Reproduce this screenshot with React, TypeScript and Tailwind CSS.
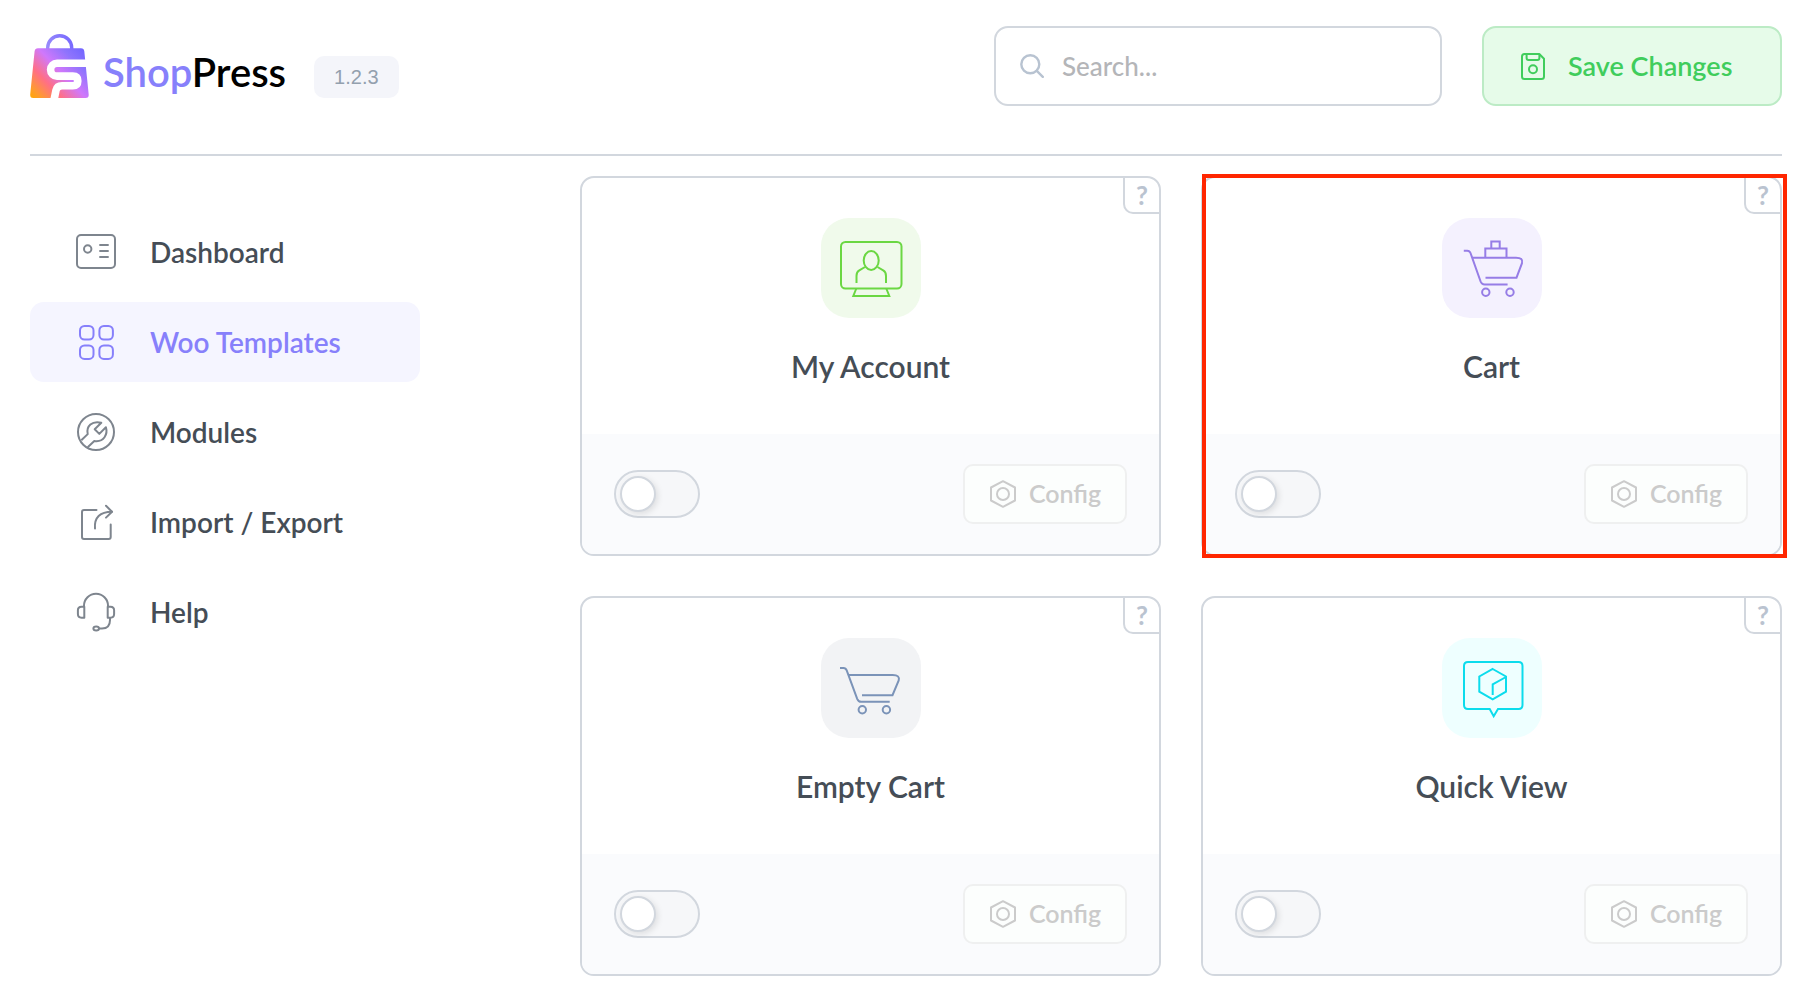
import React, { useState } from 'react';

type IconProps = { className?: string };

const Logo: React.FC<IconProps> = ({ className }) => (
  <svg viewBox="0 0 59 64" fill="none" className={className} aria-hidden="true">
    <defs>
      <linearGradient id="bag" x1="0" y1="64" x2="52" y2="14" gradientUnits="userSpaceOnUse">
        <stop offset="0" stopColor="#ffa800" />
        <stop offset="0.12" stopColor="#ff9a30" />
        <stop offset="0.32" stopColor="#ff6f86" />
        <stop offset="0.56" stopColor="#d078fb" />
        <stop offset="0.8" stopColor="#8f74fd" />
        <stop offset="1" stopColor="#7366ff" />
      </linearGradient>
      <linearGradient id="handle" x1="16" y1="14" x2="43" y2="6" gradientUnits="userSpaceOnUse">
        <stop offset="0" stopColor="#9a8dfb" />
        <stop offset="1" stopColor="#7668ff" />
      </linearGradient>
    </defs>
    <path d="M17.7 16v-2.2a12 12 0 0 1 24 0V16" stroke="url(#handle)" strokeWidth="3.4" />
    <path
      d="M8 14.3h43q3 0 3.3 3l4.4 43.2q.3 3.5-3.2 3.5H3.2Q0 64 .2 60.5l4.4-43.2q.4-3 3.4-3z"
      fill="url(#bag)"
    />
    <path
      d="M59 29.3H27a6.4 6.4 0 0 0 0 12.8h15.8q5 0 5 4.8t-5 4.8H32q-5 0-6 4.5L24 66"
      stroke="#fff"
      strokeWidth="7.6"
    />
  </svg>
);

const DashboardIcon: React.FC<IconProps> = ({ className }) => (
  <svg viewBox="0 0 40 40" fill="none" stroke="currentColor" strokeWidth="2" className={className} aria-hidden="true">
    <rect x="1" y="3" width="38" height="33" rx="4" />
    <circle cx="11.7" cy="17" r="3.7" />
    <path d="M23.3 13h9.4M23.3 19h9.4M23.3 25h9.4" />
  </svg>
);

const TemplatesIcon: React.FC<IconProps> = ({ className }) => (
  <svg viewBox="0 0 40 40" fill="none" stroke="currentColor" strokeWidth="2" className={className} aria-hidden="true">
    <rect x="4" y="4" width="13.5" height="13.5" rx="4.5" />
    <rect x="23.4" y="4" width="13.5" height="13.5" rx="4.5" />
    <rect x="4" y="23.4" width="13.5" height="13.5" rx="4.5" />
    <rect x="23.4" y="23.4" width="13.5" height="13.5" rx="4.5" />
  </svg>
);

const ModulesIcon: React.FC<IconProps> = ({ className }) => (
  <svg viewBox="0 0 40 40" fill="none" stroke="currentColor" strokeWidth="2" strokeLinejoin="round" className={className} aria-hidden="true">
    <circle cx="20" cy="20" r="18" />
    <path d="m5.3 28.3 6.4-6.2C10 14 16 8.5 25.3 10.7l-6.6 6.6 4.6 4.6 6.6-6.6C32 22 28 30.500 18.3 29l-6.6 6.2" />
  </svg>
);

const TransferIcon: React.FC<IconProps> = ({ className }) => (
  <svg viewBox="0 0 40 40" fill="none" stroke="currentColor" strokeWidth="2" strokeLinecap="round" strokeLinejoin="round" className={className} aria-hidden="true">
    <path d="M20.5 8H8q-2 0-2 2v25q0 2 2 2h24.7q2 0 2-2V22.5" />
    <path d="M19 26.5C18 15.5 24 9.7 36 9.7" />
    <path d="m30 3.8 6 5.9-6 5.9" />
  </svg>
);

const HelpIcon: React.FC<IconProps> = ({ className }) => (
  <svg viewBox="0 0 40 40" fill="none" stroke="currentColor" strokeWidth="2" strokeLinejoin="round" className={className} aria-hidden="true">
    <path d="M8 15v-1.3a12 12 0 0 1 24 0V15" />
    <path d="M8.3 14.7H5.5Q1.9 14.7 1.9 18.3v3.8q0 3.6 3.6 3.6h2.8z" />
    <path d="M31.7 14.7h2.8q3.6 0 3.6 3.6v3.8q0 3.6-3.6 3.6h-2.8z" />
    <path d="M34 26v2q0 8.5-8 8.5h-3" />
    <ellipse cx="20.2" cy="36.5" rx="2.8" ry="1.9" />
  </svg>
);

const SearchIcon: React.FC<IconProps> = ({ className }) => (
  <svg viewBox="0 0 24 24" fill="none" stroke="currentColor" strokeWidth="2.4" strokeLinecap="round" className={className} aria-hidden="true">
    <circle cx="10.3" cy="10.3" r="9" />
    <path d="m16.8 16.8 6 6" />
  </svg>
);

const SaveIcon: React.FC<IconProps> = ({ className }) => (
  <svg viewBox="0 0 24 27" fill="none" stroke="currentColor" strokeWidth="2" strokeLinejoin="round" className={className} aria-hidden="true">
    <path d="M3.5 1h14.8L23 5.8v17.7q0 2.5-2.5 2.5h-17Q1 26 1 23.5v-20Q1 1 3.5 1z" />
    <path d="M5.6 1v4q0 2 2 2h8.800q2 0 2-2V1" />
    <circle cx="12" cy="16.3" r="4" />
  </svg>
);

const ConfigIcon: React.FC<IconProps> = ({ className }) => (
  <svg viewBox="0 0 28 28" fill="none" stroke="currentColor" strokeWidth="2" strokeLinejoin="round" className={className} aria-hidden="true">
    <path d="M14 1.2 26 7.5v13l-12 6.3-12-6.3v-13z" />
    <circle cx="14" cy="14" r="6" />
  </svg>
);

const AccountArt: React.FC<IconProps> = ({ className }) => (
  <svg viewBox="0 0 100 100" fill="none" stroke="currentColor" strokeWidth="2" className={className} aria-hidden="true">
    <rect x="20" y="24" width="60.5" height="46.5" rx="4.5" />
    <path d="m35.3 70.5-3 7.5h36l-3-7.5" />
    <ellipse cx="50.2" cy="42.5" rx="7.5" ry="9.5" />
    <path d="M35.5 65v-7q0-4 2.8-5.600L44 49M65 65v-7q0-4-2.8-5.600L56.5 49" />
  </svg>
);

const FullCartArt: React.FC<IconProps> = ({ className }) => (
  <svg viewBox="0 0 100 100" fill="none" stroke="currentColor" strokeWidth="2" className={className} aria-hidden="true">
    <path d="M21.8 32.7h3.5q2.3 0 3.2 2.3L38.6 63.5q1.2 3 4 3h23" />
    <path d="M30.3 39.7H74q7.500 0 6 5.5l-5.5 14.5H43.5" />
    <path d="M43.3 39.7v-9.2h21.2v9.2M49.3 30.5v-7h8.4v7" />
    <circle cx="43.8" cy="74.3" r="3.7" />
    <circle cx="68" cy="74.3" r="3.7" />
  </svg>
);

const EmptyCartArt: React.FC<IconProps> = ({ className }) => (
  <svg viewBox="0 0 100 100" fill="none" stroke="currentColor" strokeWidth="2" className={className} aria-hidden="true">
    <path d="M19 30h3.5q2.3 0 3.2 2.3L36.2 60.8q1.2 3 4 3h28.5" />
    <path d="M27.7 37h44q7.500 0 6 5.5L71.5 57.2H41" />
    <circle cx="41.3" cy="71.7" r="3.7" />
    <circle cx="65.4" cy="71.7" r="3.7" />
  </svg>
);

const QuickViewArt: React.FC<IconProps> = ({ className }) => (
  <svg viewBox="0 0 100 100" fill="none" stroke="currentColor" strokeWidth="2" className={className} aria-hidden="true">
    <path d="M26 24h50.500q4 0 4 4v39q0 4-4 4H56l-4.3 7.3L47.7 71H26q-4 0-4-4V28q0-4 4-4z" />
    <path d="m50.700 31 13.300 7.500v15.200l-13.300 7.600-13.400-7.600V38.500z" />
    <path d="m64 39-13.300 7.400V57" />
  </svg>
);

const navItems = [
  { label: 'Dashboard', Icon: DashboardIcon },
  { label: 'Woo Templates', Icon: TemplatesIcon },
  { label: 'Modules', Icon: ModulesIcon },
  { label: 'Import / Export', Icon: TransferIcon },
  { label: 'Help', Icon: HelpIcon },
];

const templates = [
  { title: 'My Account', Art: AccountArt, tile: 'bg-[#f0faeb] text-[#6bd743]', highlighted: false },
  { title: 'Cart', Art: FullCartArt, tile: 'bg-[#f4f1fe] text-[#967de6]', highlighted: true },
  { title: 'Empty Cart', Art: EmptyCartArt, tile: 'bg-[#f2f3f5] text-[#7b93b8]', highlighted: false },
  { title: 'Quick View', Art: QuickViewArt, tile: 'bg-[#eeffff] text-[#0cdcec]', highlighted: false },
];

interface TemplateCardProps {
  title: string;
  Art: React.FC<IconProps>;
  tile: string;
  highlighted: boolean;
}

const TemplateCard: React.FC<TemplateCardProps> = ({ title, Art, tile, highlighted }) => {
  const [enabled, setEnabled] = useState(false);

  return (
    <article className="relative flex flex-col rounded-[14px] border-2 border-[#d2d7de]">
      <button
        type="button"
        aria-label={`About ${title}`}
        className="absolute top-0 right-0 flex size-9 items-center justify-center rounded-bl-[10px] border-b-2 border-l-2 border-[#d2d7de] text-[26px] leading-none font-bold text-[#bac3d0]"
      >
        ?
      </button>

      <div className="flex flex-col items-center pt-10 pb-12">
        <div className={`size-[100px] rounded-[28px] ${tile}`}>
          <Art className="size-full" />
        </div>
        <h2 className="mt-7 text-[30px] leading-10 font-semibold">{title}</h2>
      </div>

      <div className="flex items-center justify-between rounded-b-xl bg-[#fafbfd] px-8 py-[30px]">
        <input
          type="checkbox"
          role="switch"
          aria-label={`Enable ${title}`}
          checked={enabled}
          onChange={(e) => setEnabled(e.target.checked)}
          className="flex h-12 w-[86px] appearance-none items-center rounded-full border-2 border-[#d2d7de] bg-[#f6f7f9] px-1 before:size-9 before:rounded-full before:border-2 before:border-[#d2d7de] before:bg-white before:shadow-[2px_2px_6px_rgba(0,0,0,0.1)] before:content-[''] checked:justify-end checked:bg-[#8780fb]"
        />
        <button
          type="button"
          disabled={!enabled}
          className="flex h-[60px] w-[164px] items-center justify-center gap-3 rounded-[10px] border-2 border-[#eff0f0] bg-[#fcfefd] text-[25px] font-semibold text-[#cbcbcb]"
        >
          <ConfigIcon className="size-7" />
          Config
        </button>
      </div>

      {/* Callout frame drawn over the card's edge */}
      {highlighted && (
        <div className="pointer-events-none absolute -top-1 -right-[7px] -bottom-1 -left-px border-4 border-[#ff2600]" />
      )}
    </article>
  );
};

export default function App() {
  const [query, setQuery] = useState('');
  const [active, setActive] = useState('Woo Templates');

  return (
    <div className="bg-white pr-8 pb-[26px] pl-[30px] font-['Lato','Liberation_Sans',sans-serif] text-[#454d56]">
      <header className="flex items-center justify-between border-b-2 border-[#d2d7de] pt-[26px] pb-12">
        <div className="flex items-end">
          <Logo className="h-16 w-[59px]" />
          <div className="ml-3.5 text-[40px] leading-[52px] font-semibold text-black">
            <span className="text-[#8780fb]">Shop</span>Press
          </div>
          <span className="ml-7 rounded-[10px] bg-[#f4f5fa] px-5 font-['Liberation_Sans',sans-serif] text-xl leading-[42px] text-[#93a0ae]">
            1.2.3
          </span>
        </div>

        <div className="flex gap-10">
          <label className="flex h-20 w-[448px] items-center gap-[18px] rounded-[14px] border-2 border-[#d2d7de] px-6">
            <SearchIcon className="size-6 shrink-0 text-[#b8c3d1]" />
            <input
              type="text"
              aria-label="Search"
              placeholder="Search..."
              value={query}
              onChange={(e) => setQuery(e.target.value)}
              className="min-w-0 flex-1 text-[26px] font-medium outline-none placeholder:text-[#b4b5b8]"
            />
          </label>
          <button
            type="button"
            className="flex h-20 w-[300px] items-center gap-[23px] rounded-[14px] border-2 border-[#bcebc5] bg-[#e6fbe9] pl-[37px] text-[27px] font-semibold text-[#40cd5c]"
          >
            <SaveIcon className="h-[27px] w-6" />
            Save Changes
          </button>
        </div>
      </header>

      <div className="flex gap-40">
        <nav className="flex w-[390px] shrink-0 flex-col gap-2.5 pt-14">
          {navItems.map(({ label, Icon }) => {
            const isActive = label === active;
            return (
              <a
                key={label}
                href="#"
                aria-current={isActive ? 'page' : undefined}
                onClick={() => setActive(label)}
                className={`flex h-20 items-center gap-[34px] rounded-[14px] pl-[46px] text-[28px] font-semibold ${
                  isActive ? 'bg-[#f5f5ff] text-[#8780fb]' : ''
                }`}
              >
                <Icon className={isActive ? 'size-10' : 'size-10 text-[#7e858e]'} />
                {label}
              </a>
            );
          })}
        </nav>

        <main className="grid flex-1 grid-cols-2 gap-10 pt-5">
          {templates.map((t) => (
            <TemplateCard key={t.title} {...t} />
          ))}
        </main>
      </div>
    </div>
  );
}
